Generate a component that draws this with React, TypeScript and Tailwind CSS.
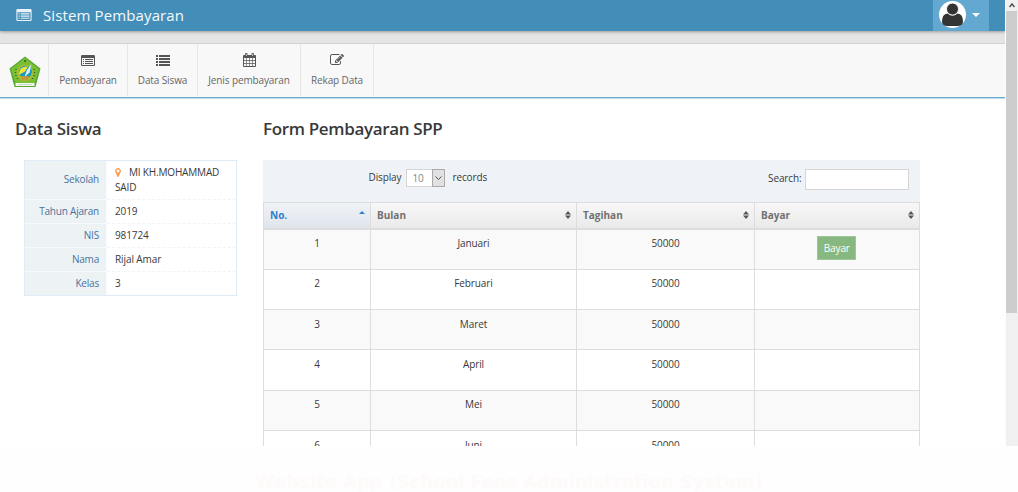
import React from "react";

type IconProps = { className?: string };

const ListAlt = ({ className }: IconProps) => (
  <svg viewBox="0 0 14 11" className={className} fill="currentColor">
    <path
      fillRule="evenodd"
      d="M1.2 0h11.6Q14 0 14 1.2v8.6Q14 11 12.8 11H1.2Q0 11 0 9.8V1.2Q0 0 1.2 0zM1 3v6.6q0 .4.4.4h11.2q.4 0 .4-.4V3z"
    />
    <path d="M2 4h1v1H2zM4 4h8v1H4zM2 6h1v1H2zM4 6h8v1H4zM2 8h1v1H2zM4 8h8v1H4z" />
  </svg>
);

const ListBars = ({ className }: IconProps) => (
  <svg viewBox="0 0 14 11" className={className} fill="currentColor">
    <path d="M0 0h2v2H0zM3 0h11v2H3zM0 3h2v2H0zM3 3h11v2H3zM0 6h2v2H0zM3 6h11v2H3zM0 9h2v2H0zM3 9h11v2H3z" />
  </svg>
);

const Calendar = ({ className }: IconProps) => (
  <svg viewBox="0 0 13 14" className={className} fill="currentColor">
    <path
      fillRule="evenodd"
      d="M1 2h1V1q0-1 1-1h.5q1 0 1 1v1h4V1q0-1 1-1h.5q1 0 1 1v1h1q1 0 1 1v10q0 1-1 1H1q-1 0-1-1V3q0-1 1-1zm0 3v2h2.300V5zm2.900 0v2h2.300V5zm2.900 0v2h2.300V5zm2.900 0v2H12V5zM1 7.700V10h2.300V7.700zm2.900 0V10h2.300V7.700zm2.900 0V10h2.300V7.700zm2.900 0V10H12V7.700zM1 10.700V13h2.300v-2.300zm2.900 0V13h2.300v-2.300zm2.900 0V13h2.300v-2.300zm2.900 0V13H12v-2.300zM2.900 1v2h.7V1zm6.500 0v2h.7V1z"
    />
  </svg>
);

const PencilSquare = ({ className }: IconProps) => (
  <svg viewBox="0 0 1792 1792" className={className} fill="currentColor">
    <path d="M888 1184l116-116-152-152-116 116v56h96v96h56zm440-720q-16-16-33 1l-350 350q-17 17-1 33t33-1l350-350q17-17 1-33zm80 594v190q0 119-84.5 203.5t-203.5 84.5h-832q-119 0-203.5-84.5t-84.5-203.5v-832q0-119 84.5-203.5t203.5-84.5h832q63 0 117 25 15 7 18 23 3 17-9 29l-49 49q-14 14-32 8-23-6-45-6h-832q-66 0-113 47t-47 113v832q0 66 47 113t113 47h832q66 0 113-47t47-113v-126q0-13 9-22l64-64q15-15 35-7t20 29zm-96-738l288 288-672 672h-288v-288zm444 132l-92 92-288-288 92-92q28-28 68-28t68 28l152 152q28 28 28 68t-28 68z" />
  </svg>
);

const MapMarker = ({ className }: IconProps) => (
  <svg viewBox="384 128 1024 1536" className={className} fill="currentColor">
    <path d="M1152 640q0-106-75-181t-181-75-181 75-75 181 75 181 181 75 181-75 75-181zm256 0q0 109-33 179l-364 774q-16 33-47.5 52t-67.5 19-67.5-19-46.5-52l-365-774q-33-70-33-179 0-212 150-362t362-150 362 150 150 362z" />
  </svg>
);

const SchoolCrest = ({ className }: IconProps) => (
  <svg viewBox="0 0 32 32" className={className}>
    <path d="M16 .5 31.500 12.500 26.500 31H5.500L.5 12.500z" fill="#58a836" />
    <path d="M16 2 30 13 25.500 27.500h-19L2 13z" fill="#79bf31" />
    <circle cx="16" cy="17" r="8.500" fill="#a3bd34" />
    <circle cx="16.500" cy="16" r="6.300" fill="#159bc4" />
    <path d="M10 17.500q.5-7.500 9-7l-3 5-5.500 3z" fill="#f2e335" />
    <path d="M22.500 8 18 14l-2.500 7 5-4.500z" fill="#e6f1ea" />
    <path d="M12 20h8l-1.500 4.500H13z" fill="#c4973a" />
    <circle cx="16" cy="5" r="1" fill="#285d24" />
    <path
      d="M7 13v1M6.500 16v1M7 19v1M8.500 22v1M25 13v1M25.500 16v1M25 19v1M23.500 22v1"
      stroke="#315e25"
      strokeWidth="1.300"
    />
    <path d="M6.500 27h19v3h-19z" fill="#f2f5ef" />
    <path d="M9 28.500h14" stroke="#b9c7b5" strokeWidth=".6" />
  </svg>
);

const Avatar = () => (
  <svg viewBox="0 0 27 27" className="size-[27px]">
    <circle cx="13.500" cy="13.500" r="13.500" fill="#fff" />
    <path
      d="M3 20.500Q3 13 8.500 12.500q2 2 5 2t5-2Q24 13 24 20.500q0 2.500-2 3.700-1 .8-3 .8H8q-2 0-3-.8-2-1.200-2-3.700z"
      fill="#333"
    />
    <circle cx="13.500" cy="8.100" r="6" fill="#333" stroke="#fff" strokeWidth=".9" />
  </svg>
);

const SortBoth = () => (
  <svg viewBox="0 0 6 8" className="h-2 w-1.5 shrink-0" fill="#555">
    <path d="M0 3.500h6L3 0zM0 4.500h6L3 8z" />
  </svg>
);

const nav = [
  { label: "Pembayaran", Icon: ListAlt, width: "w-[79px]", icon: "h-[11px] w-3.5" },
  { label: "Data Siswa", Icon: ListBars, width: "w-[70px]", icon: "h-[11px] w-3.5" },
  { label: "Jenis pembayaran", Icon: Calendar, width: "w-[103px]", icon: "h-3.5 w-[13px]" },
  { label: "Rekap Data", Icon: PencilSquare, width: "w-[73px]", icon: "h-3.5 w-3.5" },
];

const profile = [
  { label: "Tahun Ajaran", value: "2019" },
  { label: "NIS", value: "981724" },
  { label: "Nama", value: "Rijal Amar" },
  { label: "Kelas", value: "3" },
];

const months = ["Januari", "Februari", "Maret", "April", "Mei", "Juni"];
const columns = "grid grid-cols-[107px_206px_178px_1fr]";

function TopBar() {
  return (
    <header className="relative z-10 flex h-[31px] shrink-0 items-center bg-[#438eb9] pl-4 text-white shadow-[0_1px_3px_#999]">
      <ListAlt className="mb-px h-3 w-4 opacity-90" />
      <h1 className="mb-px ml-[11px] text-[15px] tracking-[0.120px] text-[#f4f9fc]">Sistem Pembayaran</h1>
      <div className="mr-4 ml-auto flex h-full w-14 items-start bg-[#62a8d1] pt-[0.500px] pl-1.5">
        <Avatar />
        <svg viewBox="0 0 8 4" className="mt-3 ml-1.5 h-1 w-2" fill="#fff">
          <path d="M0 0h8L4 4z" />
        </svg>
      </div>
    </header>
  );
}

function NavBar() {
  return (
    <div className="mt-3 shrink-0 border-b border-[#bbdbea]">
      <nav className="flex h-[55px] border-t border-b border-t-[#d4d4d4] border-b-[#6fadcc] bg-[#f8f8f8]">
        <div className="flex h-[52px] w-[49px] items-start border-r border-[#e6e6e6] pt-3 pl-[9px]">
          <SchoolCrest className="size-8" />
        </div>
        {nav.map(({ label, Icon, width, icon }) => (
          <div
            key={label}
            className={`${width} flex h-[52px] flex-col items-center border-r border-[#e6e6e6] pt-[9px] text-[10px] tracking-[-0.120px] whitespace-nowrap text-[#666]`}
          >
            <div className="flex h-3.5 items-center text-[#555]">
              <Icon className={icon} />
            </div>
            <span className="mt-1.5 leading-[14px]">{label}</span>
          </div>
        ))}
      </nav>
    </div>
  );
}

function StudentPanel() {
  return (
    <section className="w-[248px] shrink-0">
      <h2 className="h-[43px] text-[17px] leading-[23px] font-semibold tracking-[-0.300px] text-[#393939]">
        Data Siswa
      </h2>
      <dl className="ml-[9px] w-[213px] border border-[#dfecf5] text-[10px]">
        <div className="flex h-[37.500px]">
          <dt className="flex w-[82px] items-center justify-end border-r border-[#f7fbff] bg-[#edf3f4] pr-[7px] tracking-[-0.200px] text-[#4a709f]">
            Sekolah
          </dt>
          <dd className="flex-1 pt-[3.500px] pl-2 leading-[15px] text-[#393939]">
            <span className="flex items-center tracking-[-0.170px] whitespace-nowrap">
              <MapMarker className="mr-2 h-[9px] w-1.5 text-[#ff9f54]" />
              MI KH.MOHAMMAD
            </span>
            <span className="tracking-[-0.120px]">SAID</span>
          </dd>
        </div>
        {profile.map(({ label, value }) => (
          <div key={label} className="flex h-[24.200px]">
            <dt className="flex w-[82px] items-center justify-end border-t border-r border-[#f7fbff] bg-[#edf3f4] pr-[7px] tracking-[-0.200px] text-[#4a709f]">
              {label}
            </dt>
            <dd className="flex flex-1 items-center border-t border-dashed border-[#eef4fa] pl-2 tracking-[-0.100px] text-[#393939]">
              {value}
            </dd>
          </div>
        ))}
      </dl>
    </section>
  );
}

function TableHeader() {
  return (
    <div
      className={`${columns} h-[27.500px] border-t border-b-2 border-[#ddd] bg-linear-to-b from-[#f7f7f7] to-[#eaeaea] text-[10px] font-bold text-[#707070]`}
    >
      <div className="flex items-center justify-between border-r border-[#ddd] bg-linear-to-b from-[#eff3f8] to-[#e0e5ec] pt-px pr-[5px] pl-1.5 text-[#307ecc]">
        No.
        <svg viewBox="0 0 6 3" className="mb-1.5 h-[3px] w-1.5" fill="#307ecc">
          <path d="M0 3h6L3 0z" />
        </svg>
      </div>
      {["Bulan", "Tagihan", "Bayar"].map((name) => (
        <div
          key={name}
          className="flex items-center justify-between border-r border-[#ddd] pr-[5px] pl-1.5 last:border-r-0"
        >
          <span className="pt-px">{name}</span>
          <SortBoth />
        </div>
      ))}
    </div>
  );
}

function PaymentTable() {
  return (
    <section className="w-[656.500px]">
      <h2 className="h-[43px] text-[17px] leading-[23px] font-semibold tracking-[-0.340px] text-[#393939]">
        Form Pembayaran SPP
      </h2>
      <div className="flex h-[42px] items-start bg-[#eff3f8] pt-[9px] pr-[11px] pl-[105.500px] text-[10px] text-[#393939]">
        <label className="flex h-[18px] items-center tracking-[-0.120px]">
          <span className="mb-px">Display</span>
          <span className="mr-[7px] ml-[5px] flex h-[18px] w-[39px] justify-between border border-[#d5d5d5] bg-white pl-[5px] text-[#858585]">
            <span className="leading-4">10</span>
            <span className="-my-px -mr-px flex w-[13px] items-center justify-center border border-[#aaa] bg-[#e1e1e1]">
              <svg viewBox="0 0 7 4" className="h-1 w-[7px]" fill="none" stroke="#555">
                <path d="m.5.500 3 3 3-3" />
              </svg>
            </span>
          </span>
          <span className="mb-px">records</span>
        </label>
        <label className="ml-auto flex h-[21px] items-center">
          <span className="mb-[3px] tracking-[-0.120px]">Search:</span>
          <input type="text" className="ml-[3px] h-[21px] w-[104px] border border-[#d5d5d5] bg-white" />
        </label>
      </div>
      <div className="border-x border-[#ddd] text-[10px]">
        <TableHeader />
        {months.map((month, i) => (
          <div
            key={month}
            className={`${columns} h-[40.300px] border-b border-[#ddd] text-center leading-[14px] tracking-[-0.100px] text-[#393939] odd:bg-white even:bg-[#f9f9f9]`}
          >
            <div className="border-r border-[#ddd] pt-[6.700px]">{i + 1}</div>
            <div className="border-r border-[#ddd] pt-[6.700px]">{month}</div>
            <div className="border-r border-[#ddd] pt-[6.700px]">50000</div>
            <div className="flex justify-center pt-1.5">
              {i === 0 && (
                <button className="h-6 w-[39px] border border-[#9dc799] bg-[#87b87f] text-[10px] text-white">
                  Bayar
                </button>
              )}
            </div>
          </div>
        ))}
      </div>
    </section>
  );
}

function Scrollbar() {
  return (
    <aside className="flex w-3 shrink-0 flex-col bg-[#f0f0f0]">
      <div className="flex h-[11px] items-center justify-center">
        <svg viewBox="0 0 6 5" className="h-[5px] w-1.5" fill="none" stroke="#505050" strokeWidth="1.500">
          <path d="m.5 4 2.500-3 2.500 3" />
        </svg>
      </div>
      <div className="mr-px h-[302px] bg-[#cdcdcd]" />
    </aside>
  );
}

export default function App() {
  return (
    <div className="h-[492px] w-[1018px] overflow-hidden bg-[#fefefe] font-['Open_Sans',sans-serif]">
      <div className="flex h-[446px] overflow-hidden">
        <div className="mr-px flex w-[1005px] flex-col overflow-hidden bg-[#e4e4e4]">
          <TopBar />
          <NavBar />
          <main className="flex min-h-0 flex-1 overflow-hidden bg-white pt-[18px] pl-[15px]">
            <StudentPanel />
            <PaymentTable />
          </main>
        </div>
        <Scrollbar />
      </div>
      <footer className="pt-6 text-center font-['DejaVu_Sans',sans-serif] text-[18px] leading-6 font-bold tracking-[-0.040px] text-[#fffafa]">
        Website App (School Fees Administration System)
      </footer>
    </div>
  );
}
